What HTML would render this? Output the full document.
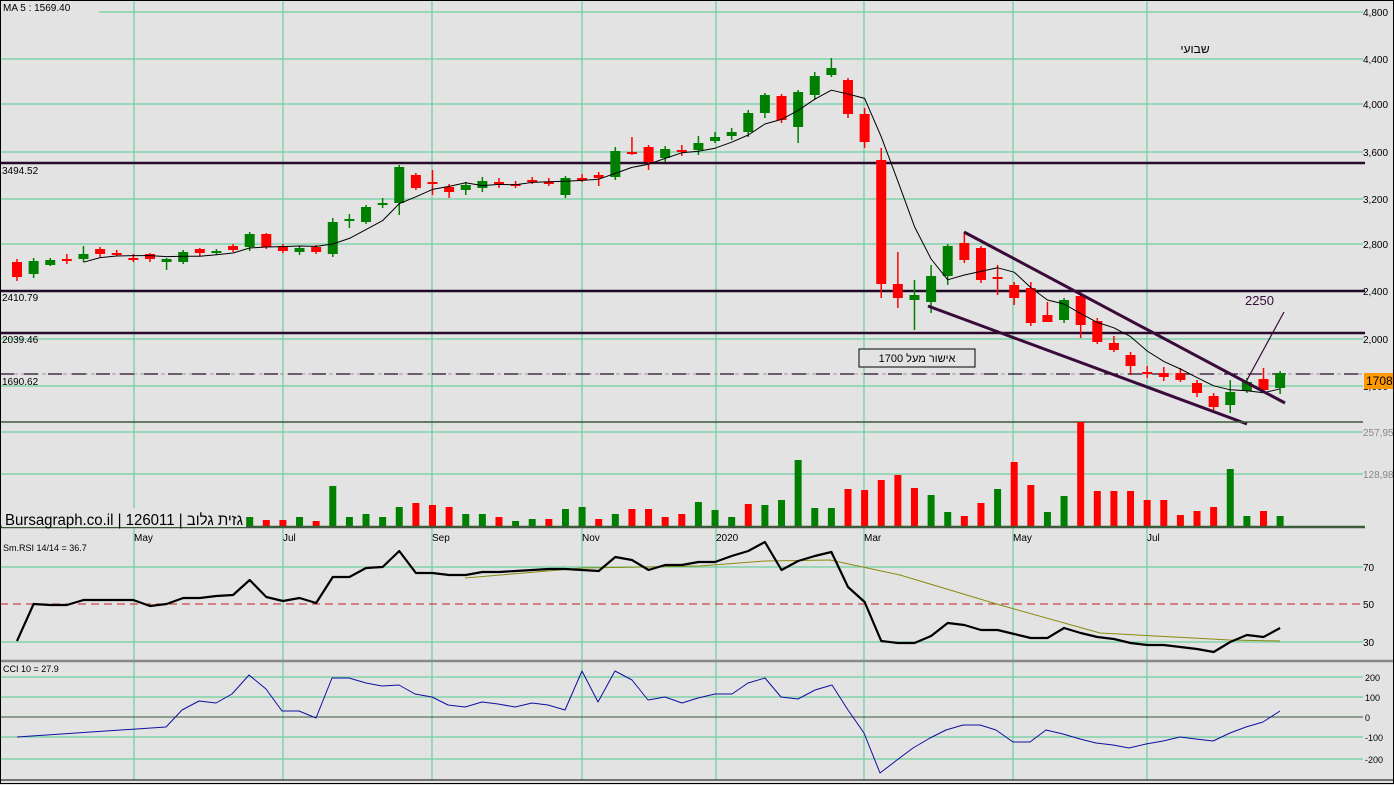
<!DOCTYPE html>
<html><head><meta charset="utf-8"><style>
html,body{margin:0;padding:0;background:#e3e3e3;}
svg{display:block;font-family:"Liberation Sans","Noto Sans CJK JP",sans-serif;}
</style></head><body>
<svg id="s" width="1394" height="785" xmlns="http://www.w3.org/2000/svg"></svg>
<script>
var s=document.getElementById('s'),h='';
function L(x1,y1,x2,y2,c,w,d){h+='<line x1="'+x1+'" y1="'+y1+'" x2="'+x2+'" y2="'+y2+'" stroke="'+c+'" stroke-width="'+(w||1)+'"'+(d?' stroke-dasharray="'+d+'"':'')+'/>';}
function R(x,y,w,hh,c,st){h+='<rect x="'+x+'" y="'+y+'" width="'+w+'" height="'+hh+'" fill="'+c+'"'+(st?' stroke="'+st+'"':'')+'/>';}
function T(x,y,t,sz,c,a){h+='<text x="'+x+'" y="'+y+'" font-size="'+sz+'" fill="'+(c||'#000')+'"'+(a?' text-anchor="'+a+'"':'')+'>'+t+'</text>';}
function P(pts,c,w){h+='<polyline fill="none" stroke="'+c+'" stroke-width="'+w+'" stroke-linejoin="round" points="'+pts.map(function(p){return p.join(',')}).join(' ')+'"/>';}
R(0,0,1394,785,'#e3e3e3');
var G='#6fcf9f';
[12,59,104,152,199,244,291,339,386,432,474,567,642,677,697,737,759].forEach(function(y){L(0,y,1363,y,G,1.2);});
[134,283,432,582,716,864,1013,1147].forEach(function(x){L(x,0,x,780,G,1.2);});
var C=[[262,277,259,281],[274,261,258,278],[265,260,258,266],[259,259,254,264],[259,254,246,262],[249,254,247,257],[253,253,250,256],[258,258,254,262],[254,259,253,262],[262,259,258,270],[262,252,250,264],[249,253,248,256],[253,251,249,255],[246,250,244,252],[247,234,232,251],[234,247,233,249],[246,251,244,253],[252,248,246,255],[247,252,245,254],[254,222,218,257],[220,219,214,228],[222,207,205,224],[205,203,198,208],[203,167,165,215],[175,188,173,190],[182,182,170,195],[187,192,184,198],[190,185,182,195],[188,181,177,192],[182,182,178,188],[184,184,181,188],[180,180,177,184],[182,182,178,186],[195,178,176,198],[178,178,174,182],[175,178,172,186],[177,151,147,180],[152,152,137,155],[147,162,145,170],[158,149,146,162],[150,150,145,156],[150,143,136,155],[141,137,132,143],[136,132,128,140],[132,113,110,137],[113,95,93,118],[96,120,94,123],[127,92,90,143],[95,76,72,100],[75,68,58,77],[80,114,78,118],[114,142,108,148],[160,284,148,298],[284,298,252,308],[300,295,280,330],[302,276,265,313],[276,246,244,285],[243,260,232,263],[248,280,246,283],[277,277,265,295],[285,298,282,305],[288,323,282,326],[315,322,302,322],[320,300,298,323],[296,325,292,338],[321,342,318,344],[343,350,336,352],[355,366,352,375],[372,372,366,378],[373,377,367,381],[373,380,368,382],[383,393,380,397],[396,407,393,410],[405,392,380,413],[391,382,378,393],[379,390,368,392],[388,373,371,394]];
var sp=16.62,x0=17;
L(0,163,1365,163,'#2a0a2a',2.6);L(0,291,1365,291,'#1e0a24',2.6);L(0,333,1365,333,'#2a0a2a',2.6);
L(0,374,1365,374,'#999',1,'4,3');L(0,374,1365,374,'#2a0a2a',1.3,'14,10');
var ma=[];
C.forEach(function(c,i){var x=x0+i*sp;var up=c[1]<c[0];var col=up?'#008000':'#ff0000';
L(x,c[2],x,c[3],col,1.5);var t=Math.min(c[0],c[1]),b=Math.max(c[0],c[1]);R(x-5,t,10,Math.max(b-t,2),col);
if(i>=4){var a=0;for(var k=i-4;k<=i;k++)a+=C[k][1];ma.push([x,(a/5).toFixed(1)]);}});
P(ma,'#000',1);
L(964,232,1285,403,'#3a0a3a',3);L(928,306,1247,424,'#3a0a3a',3);L(1247,380,1284,312,'#3a0a3a',1.2);
T(1245,305,'2250',13,'#3a0a3a');
R(859,349,116,18,'#e3e3e3','#000');T(917,362,'אישור מעל 1700',11,'#000','middle');
T(1195,53,'שבועי',12,'#000','middle');
R(1,1,98,12,'#e3e3e3');T(3,11,'MA 5 : 1569.40',10);
T(2,174,'3494.52',10);T(2,301,'2410.79',10);T(2,343,'2039.46',10);T(2,385,'1690.62',10);
[['4,800',12],['4,400',59],['4,000',104],['3,600',152],['3,200',199],['2,800',244],['2,400',291],['2,000',339],['1,600',386]].forEach(function(a){T(1363,a[1]+4,a[0],10,'#000');});
R(1364,373,30,16,'#ff9900');T(1366,385,'1708.',12,'#000');
T(1363,436,'257,959',10,'#888');T(1363,478,'128,980',10,'#888');
L(0,422,1363,422,'#3a5a3a',1.5);
var V=[[517,1],[520,0],[520,0],[517,1],[521,0],[486,1],[517,1],[514,1],[517,1],[507,1],[503,0],[505,0],[507,0],[514,1],[514,1],[517,0],[521,1],[519,1],[519,0],[509,1],[507,1],[519,0],[514,1],[509,0],[509,0],[517,0],[514,0],[502,1],[510,1],[517,1],[504,0],[505,1],[500,1],[460,1],[508,1],[508,1],[489,0],[490,0],[480,0],[475,0],[488,0],[495,1],[512,1],[516,0],[503,0],[489,1],[462,0],[485,0],[512,1],[496,1],[422,0],[491,0],[491,0],[491,0],[500,0],[500,0],[515,0],[511,0],[507,0],[469,1],[516,1],[511,0],[516,1]];
V.forEach(function(v,i){var x=x0+(i+14)*sp;R(x-3.5,v[0],7,527-v[0],v[1]?'#008000':'#ff0000');});
L(0,527,1365,527,'#3a5a3a',2.5);
R(2,508,244,19,'#e3e3e3');
h+='<text x="5" y="525" font-size="15.5" textLength="238" lengthAdjust="spacingAndGlyphs" fill="#000" direction="ltr" unicode-bidi="embed">Bursagraph.co.il | 126011 | גזית גלוב</text>';
[['May',134],['Jul',283],['Sep',432],['Nov',582],['2020',716],['Mar',864],['May',1013],['Jul',1147]].forEach(function(m){T(m[1],541,m[0],10,'#000');});
L(0,604,1363,604,'#c02020',1,'8,5');
T(3,551,'Sm.RSI 14/14 = 36.7',9);
[['70',567],['50',604],['30',642]].forEach(function(a){T(1363,a[1]+4,a[0],10);});
var r=[641,604,605,605,600,600,600,600,606,604,598,598,596,595,580,597,601,598,603,577,577,568,567,551,573,573,575,575,572,572,571,570,569,569,570,571,557,560,570,565,565,562,562,556,551,542,570,561,556,552,587,602,641,643,643,636,623,625,630,630,634,638,638,628,633,637,639,643,645,645,647,649,652,642,635,637,628];
P([[465,578],[582,568],[700,566],[765,561],[830,560],[900,575],[1000,605],[1100,633],[1230,640],[1280,641]],'#8a8a10',1);
P(r.map(function(y,i){return [x0+i*sp,y]}),'#000',2.2);
L(0,661,1394,661,'#888',2.5);
L(0,717,1363,717,'#3a5a3a',1);
T(3,672,'CCI 10 = 27.9',9);
[['200',677],['100',697],['0',717],['-100',737],['-200',759]].forEach(function(a){T(1365,a[1]+4,a[0],9);});
var cc=[[17,737],[166,727],[182,710],[199,701],[216,703],[232,694],[249,675],[266,689],[282,711],[299,711],[316,718],[332,678],[349,678],[366,683],[382,686],[399,685],[415,694],[432,697],[448,705],[465,707],[482,702],[498,704],[515,707],[532,703],[548,705],[565,710],[582,671],[598,702],[615,671],[632,680],[648,700],[665,697],[682,703],[698,698],[715,694],[732,694],[748,683],[765,678],[781,697],[798,699],[815,690],[832,685],[848,710],[864,733],[880,773],[897,760],[913,748],[930,738],[946,730],[963,725],[980,725],[996,730],[1013,742],[1030,742],[1046,730],[1063,734],[1080,739],[1096,743],[1113,745],[1129,748],[1146,744],[1163,741],[1180,737],[1196,739],[1213,741],[1230,733],[1246,727],[1263,722],[1280,711]];
P(cc,'#1010a0',1);
R(0.5,0.5,1393,783,'none','#000');
L(0,780,1394,780,'#000',1);
s.innerHTML=h;
</script>
</body></html>
